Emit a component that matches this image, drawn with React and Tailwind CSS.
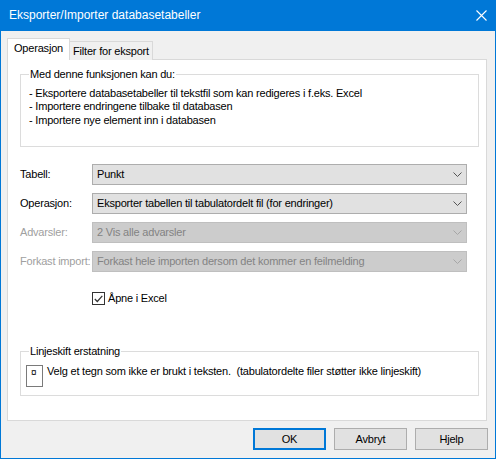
import React from "react";

const Chevron = ({ disabled }) => (
  <svg width="9" height="5" viewBox="0 0 9 5" className="mr-[4px] shrink-0">
    <path d="M0.5 0.5 L4.5 4.5 L8.5 0.5" fill="none" stroke={disabled ? "#a6a6a6" : "#555555"} strokeWidth="1" />
  </svg>
);

const Combo = ({ label, value, disabled }) => (
  <div className="flex items-center h-[21px]">
    <div className={`w-[72px] shrink-0 whitespace-nowrap ${disabled ? "text-[#a0a0a0]" : "text-black"}`}>{label}</div>
    <div
      className={`w-[375px] h-[21px] flex items-center justify-between pl-[4px] border ${
        disabled ? "bg-[#cccccc] border-[#bfbfbf] text-[#838383]" : "bg-[#e1e1e1] border-[#adadad] text-black"
      }`}
    >
      <span className="whitespace-nowrap">{value}</span>
      <Chevron disabled={disabled} />
    </div>
  </div>
);

export default function App() {
  return (
    <div
      className="w-[496px] h-[459px] bg-[#f0f0f0] border border-[#0078d7] border-t-0 flex flex-col text-[11px] leading-[13px] tracking-[-0.2px] text-black"
      style={{ fontFamily: '"Liberation Sans", Arial, sans-serif' }}
    >
      {/* title bar */}
      <div className="h-[31px] bg-[#0078d7] flex items-center justify-between pl-[9px] pr-[8px] text-white text-[12px] tracking-normal -mx-px">
        <span>Eksporter/Importer databasetabeller</span>
        <svg width="11" height="11" viewBox="0 0 11 11" className="mr-[1px]">
          <path d="M0.5 0.5 L10.5 10.5 M10.5 0.5 L0.5 10.5" stroke="white" strokeWidth="1.1" />
        </svg>
      </div>

      {/* tabs */}
      <div className="ml-[6px] mt-[7px] flex items-end h-[22px] relative z-10">
        <div className="w-[63px] h-[22px] bg-white border border-[#d9d9d9] border-b-0 flex items-center justify-center pb-[2px]">
          Operasjon
        </div>
        <div className="w-[83px] h-[19px] bg-[#f0f0f0] border border-[#d9d9d9] border-l-0 border-b-0 flex items-center justify-center whitespace-nowrap">
          Filter for eksport
        </div>
      </div>

      {/* panel */}
      <div className="ml-[6px] w-[480px] h-[362px] -mt-px bg-white border border-[#d9d9d9] flex flex-col pl-[12px]">
        <fieldset className="mt-[7px] w-[459px] h-[80px] border border-[#dcdcdc] px-[8px]">
          <legend className="px-[1px] leading-[14px]">Med denne funksjonen kan du:</legend>
          <div className="pt-[6px] leading-[13.4px]">
            <div>- Eksportere databasetabeller til tekstfil som kan redigeres i f.eks. Excel</div>
            <div>- Importere endringene tilbake til databasen</div>
            <div>- Importere nye element inn i databasen</div>
          </div>
        </fieldset>

        <div className="mt-[17px] flex flex-col gap-[8px]">
          <Combo label="Tabell:" value="Punkt" />
          <Combo label="Operasjon:" value="Eksporter tabellen til tabulatordelt fil (for endringer)" />
          <Combo label="Advarsler:" value="2 Vis alle advarsler" disabled />
          <Combo label="Forkast import:" value="Forkast hele importen dersom det kommer en feilmelding" disabled />
        </div>

        <div className="mt-[20px] ml-[72px] flex items-center gap-[3px] h-[13px]">
          <div className="w-[13px] h-[13px] border border-[#333333] bg-white flex items-center justify-center">
            <svg width="9" height="8" viewBox="0 0 9 8">
              <path d="M0.8 4 L3.3 6.5 L8.3 0.8" fill="none" stroke="#333333" strokeWidth="1.2" />
            </svg>
          </div>
          <span>Åpne i Excel</span>
        </div>

        <fieldset className="mt-[39px] w-[459px] h-[52px] border border-[#dcdcdc] px-[5px]">
          <legend className="px-[1px] ml-[3px] leading-[14px]">Linjeskift erstatning</legend>
          <div className="flex items-start mt-[7px]">
            <div className="w-[17px] h-[22px] border border-[#7a7a7a] bg-white pl-[4px] pt-[1px] text-[10px] leading-[11px]">
              ¤
            </div>
            <span className="ml-[4px] whitespace-nowrap">
              Velg et tegn som ikke er brukt i teksten.&nbsp; (tabulatordelte filer støtter ikke linjeskift)
            </span>
          </div>
        </fieldset>
      </div>

      {/* buttons */}
      <div className="mt-[7px] flex justify-end gap-[8px] pr-[7px]">
        <button className="w-[73px] h-[22px] bg-[#e1e1e1] border-2 border-[#0078d7]">OK</button>
        <button className="w-[73px] h-[22px] bg-[#e1e1e1] border border-[#adadad]">Avbryt</button>
        <button className="w-[73px] h-[22px] bg-[#e1e1e1] border border-[#adadad]">Hjelp</button>
      </div>
    </div>
  );
}
